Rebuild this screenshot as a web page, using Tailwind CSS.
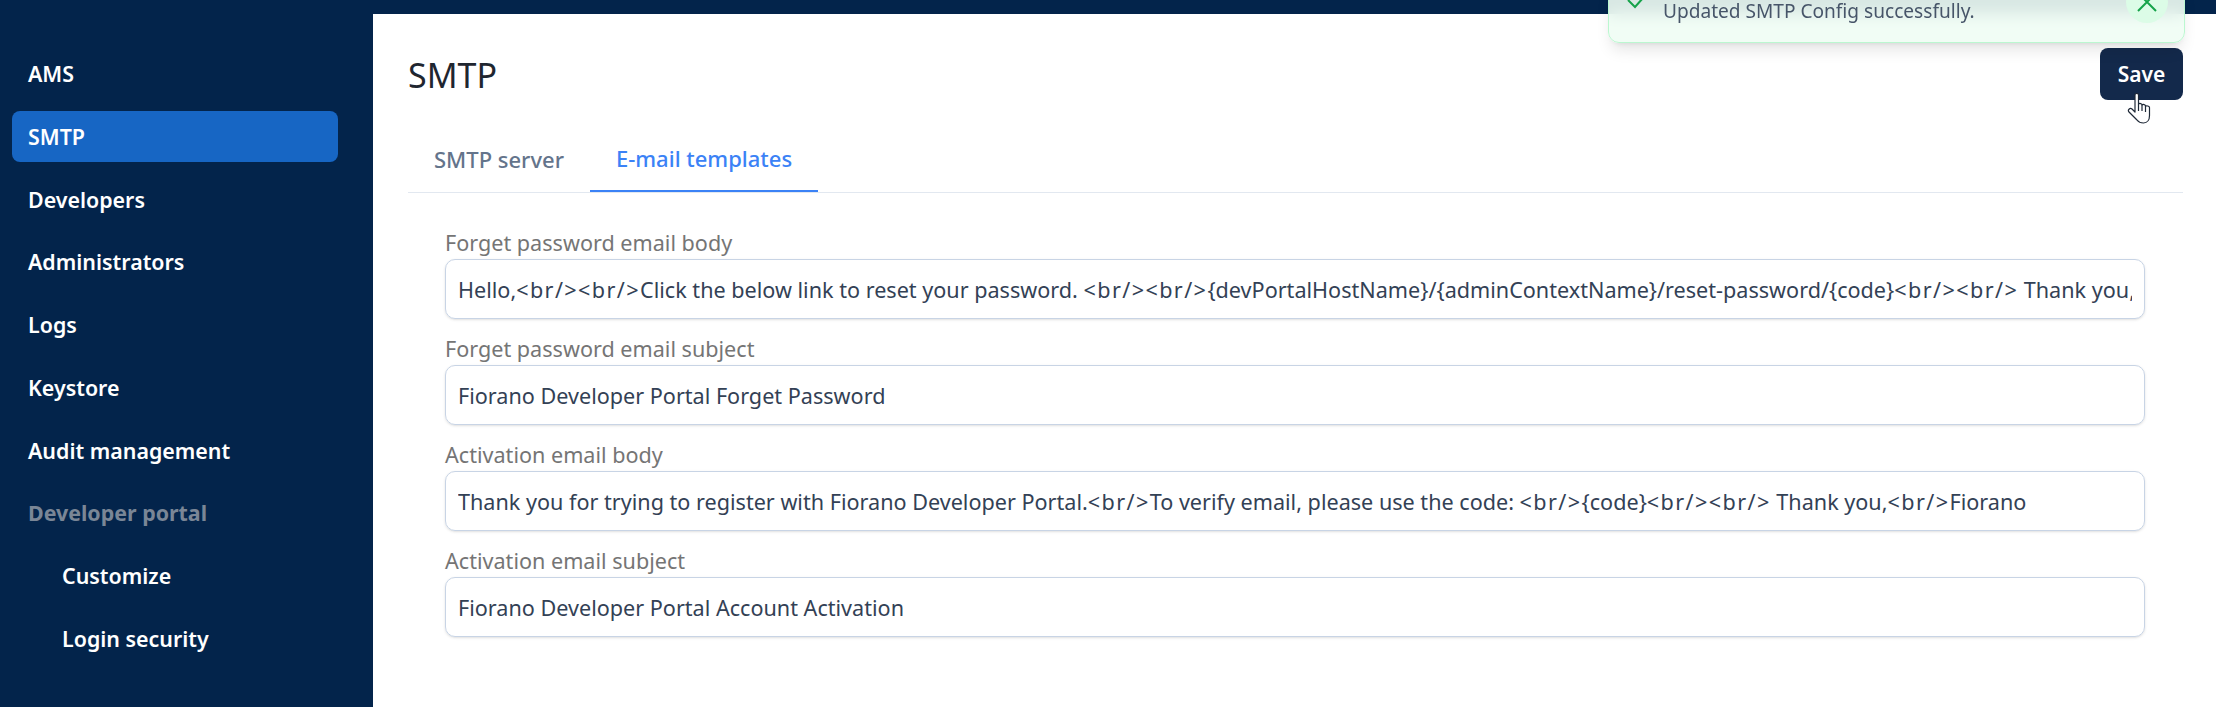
<!DOCTYPE html>
<html>
<head>
<meta charset="utf-8">
<script src="https://cdn.jsdelivr.net/npm/@tailwindcss/browser@4"></script>
</head>
<body class="bg-[#03244b] font-['Noto_Sans',sans-serif] overflow-hidden">
<div class="relative w-[2216px] h-[707px] flex pt-[14px] overflow-hidden">
  <aside class="w-[373px] shrink-0 pt-[34px] pl-[12px] pr-[35px] flex flex-col gap-[11.8px] text-white text-[21.4px] font-semibold">
    <div class="h-[51px] flex items-center px-[16px] pt-[1.5px] rounded-[8px]">AMS</div>
    <div class="h-[51px] flex items-center px-[16px] pt-[1.5px] rounded-[8px] bg-[#1766c4]">SMTP</div>
    <div class="h-[51px] flex items-center px-[16px] pt-[1.5px] rounded-[8px]">Developers</div>
    <div class="h-[51px] flex items-center px-[16px] pt-[0.5px] rounded-[8px]">Administrators</div>
    <div class="h-[51px] flex items-center px-[16px] pt-[1.5px] rounded-[8px]">Logs</div>
    <div class="h-[51px] flex items-center px-[16px] pt-[1.5px] rounded-[8px]">Keystore</div>
    <div class="h-[51px] flex items-center px-[16px] pt-[1.5px] rounded-[8px]">Audit management</div>
    <div class="h-[51px] flex items-center px-[16px] pt-[0.5px] rounded-[8px] text-[#7a8696] font-bold">Developer portal</div>
    <div class="h-[51px] flex items-center pl-[50px] pt-[0.5px] rounded-[8px]">Customize</div>
    <div class="h-[51px] flex items-center pl-[50px] pt-[1.5px] rounded-[8px]">Login security</div>
  </aside>
  <main class="flex-1 min-w-0 bg-white pl-[35px] pr-[33px]">
    <header class="flex items-center justify-between pt-[34px] h-[86px]">
      <h1 class="text-[34px] font-normal text-[#1f2630] leading-none pt-[2px]">SMTP</h1>
      <button class="w-[83px] h-[52px] rounded-[8px] bg-[#13294b] text-white text-[21px] font-semibold pt-[2px]">Save</button>
    </header>
    <nav class="mt-[26px] flex border-b border-[#e2e8f0] h-[67px] text-[22px] font-medium text-[#64748b]">
      <div class="h-[66px] flex items-center px-[26px]">SMTP server</div>
      <div class="h-[66px] flex items-center px-[26px] text-[#3b82f6] border-b-2 border-[#3b82f6]">E-mail templates</div>
    </nav>
    <form class="pl-[37px] pr-[38px] pt-[34px] flex flex-col text-[21.6px]">
      <div class="h-[106px]">
        <label class="block h-[32px] leading-[31px] text-[#757575]">Forget password email body</label>
        <div class="h-[60px] border border-[#c8d4e5] rounded-[10px] shadow-sm px-[12px] pt-[2px] flex items-center text-[#334155]"><div class="overflow-hidden whitespace-nowrap">Hello,<span class="tracking-[1.4px]">&lt;br/&gt;&lt;br/&gt;</span>Click the below link to reset your password. <span class="tracking-[1.4px]">&lt;br/&gt;&lt;br/&gt;</span>{devPortalHostName}/{adminContextName}/reset-password/{code}<span class="tracking-[1.4px]">&lt;br/&gt;&lt;br/&gt;</span> Thank you,<span class="tracking-[1.4px]">&lt;br/&gt;</span>Fiorano</div></div>
      </div>
      <div class="h-[106px]">
        <label class="block h-[32px] leading-[31px] text-[#757575]">Forget password email subject</label>
        <div class="h-[60px] border border-[#c8d4e5] rounded-[10px] shadow-sm px-[12px] pt-[2px] flex items-center text-[#334155]"><div class="overflow-hidden whitespace-nowrap">Fiorano Developer Portal Forget Password</div></div>
      </div>
      <div class="h-[106px]">
        <label class="block h-[32px] leading-[31px] text-[#757575]">Activation email body</label>
        <div class="h-[60px] border border-[#c8d4e5] rounded-[10px] shadow-sm px-[12px] pt-[2px] flex items-center text-[#334155]"><div class="overflow-hidden whitespace-nowrap">Thank you for trying to register with Fiorano Developer Portal.<span class="tracking-[1.4px]">&lt;br/&gt;</span>To verify email, please use the code: <span class="tracking-[1.4px]">&lt;br/&gt;</span>{code}<span class="tracking-[1.4px]">&lt;br/&gt;&lt;br/&gt;</span> Thank you,<span class="tracking-[1.4px]">&lt;br/&gt;</span>Fiorano</div></div>
      </div>
      <div class="h-[106px]">
        <label class="block h-[32px] leading-[31px] text-[#757575]">Activation email subject</label>
        <div class="h-[60px] border border-[#c8d4e5] rounded-[10px] shadow-sm px-[12px] pt-[2px] flex items-center text-[#334155]"><div class="overflow-hidden whitespace-nowrap">Fiorano Developer Portal Account Activation</div></div>
      </div>
    </form>
  </main>
  <div class="absolute left-[1608px] top-[-20px] w-[577px] h-[63px] rounded-[11px] border border-[#bbf7d0] bg-[#f0fdf4]/90 backdrop-blur-sm shadow-lg text-[#475569] text-[19.1px]">
    <svg class="absolute left-[17px] top-[16px] w-[20px] h-[12px]" viewBox="0 0 20 12" fill="none" stroke="#16a34a" stroke-width="2"><path d="M2 3l7 7 8-9"/></svg>
    <span class="absolute left-[54px] top-[17px] leading-[26px] whitespace-nowrap">Updated SMTP Config successfully.</span>
    <div class="absolute left-[517px] top-[0px] w-[42px] h-[42px] rounded-full bg-[#dcfce7] flex items-center justify-center">
      <svg class="w-[20px] h-[20px]" viewBox="0 0 20 20" fill="none" stroke="#16a34a" stroke-width="2"><path d="M1 1l18 18M19 1L1 19"/></svg>
    </div>
  </div>
  <svg class="absolute left-[2127px] top-[93px] w-[26px] h-[31px]" viewBox="0 0 26 31" fill="#fff" stroke="#1f2937" stroke-width="1.2" stroke-linejoin="round"><path d="M8 2c0-2 3.500-2 3.500 0v9c1-1 3.500-.5 3.500 1 1-1 3.500-.5 3.500 1 1-.5 4 0 4 1.500v8c0 4-2 7.500-6 7.500-3 0-5-1-6.500-3l-8-8c-2-2 1-4.500 3-3l3 3z"/><path d="M11.500 11v7M15 12v6M18.500 13v6" fill="none"/></svg>
</div>
</body>
</html>
